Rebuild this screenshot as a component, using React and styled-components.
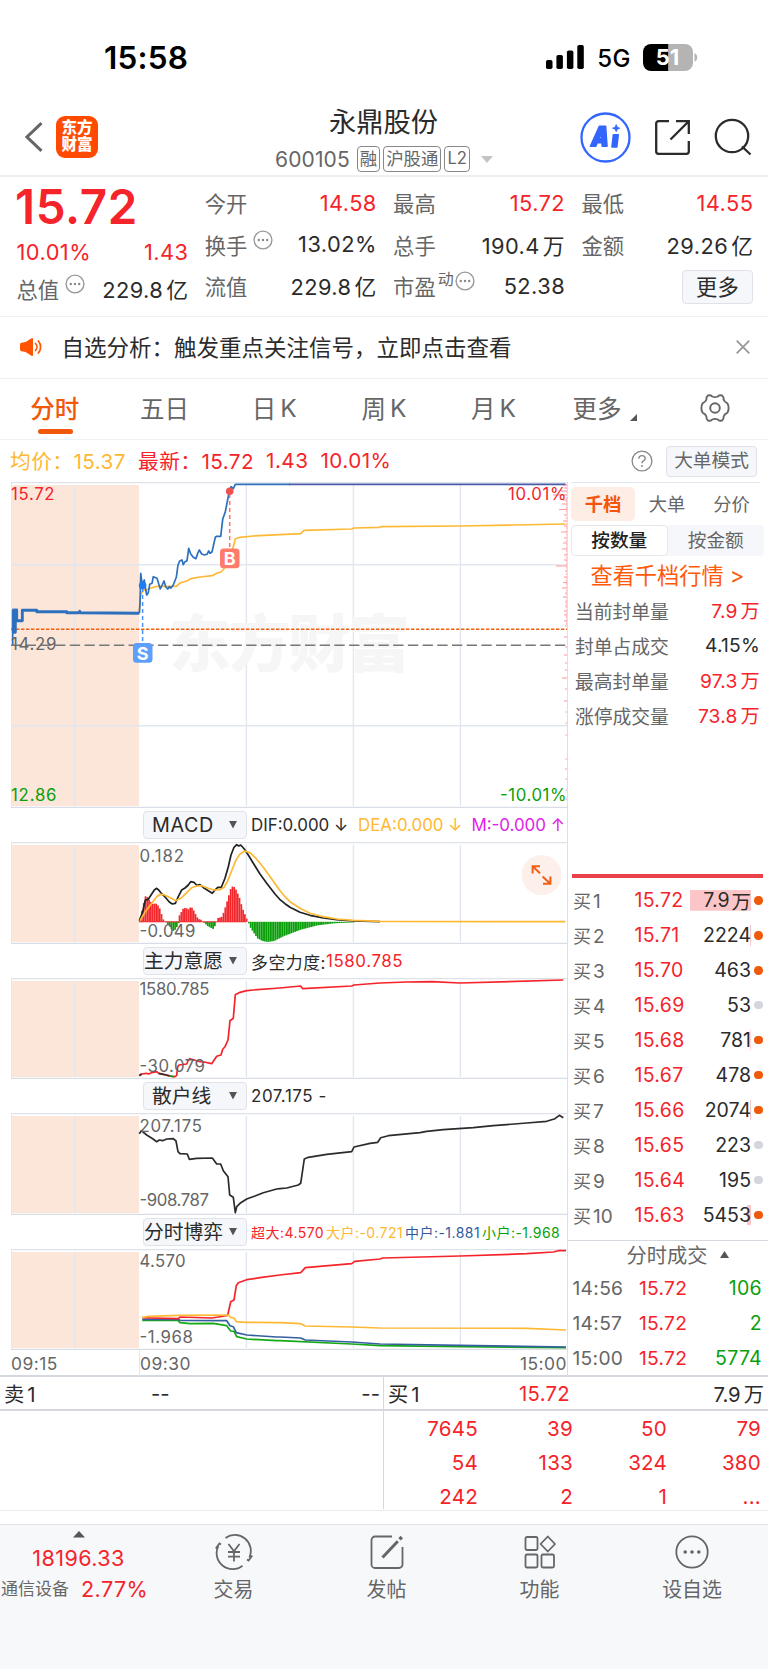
import React from 'react';
import styled, { createGlobalStyle, css } from 'styled-components';

const RED = '#f5242a';
const GREEN = '#0a9f0a';
const ORANGE = '#f5540a';
const AMBER = '#fdb933';
const GREY = '#666';
const INK = '#2b2b2b';
const GRID = '#e2e7ef';
const LINE = '#d5d9df';

const Global = createGlobalStyle`
  * { box-sizing: border-box; }
  body { margin: 0; background: #fff; }
  #root { font-family: Inter, "Noto Sans CJK SC", sans-serif; color: ${INK}; }
  svg { display: block; flex: none; }
  svg text { font-family: Inter, "Noto Sans CJK SC", sans-serif; }
`;

const Page = styled.div`
  width: 768px;
  height: 1669px;
  display: flex;
  flex-direction: column;
  overflow: hidden;
  white-space: nowrap;
`;

/* ---------- status bar ---------- */
const StatusBar = styled.div`
  height: 90px;
  display: flex;
  align-items: center;
  padding: 24px 70px 0 104px;
`;
const Clock = styled.div`
  font-size: 31.5px;
  font-weight: 600;
  line-height: 36px;
  letter-spacing: 0.2px;
  color: #000;
  flex: 1;
  padding-top: 1px;
`;
const Network = styled.div`
  font-size: 24px;
  font-weight: 450;
  line-height: 36px;
  letter-spacing: 0.5px;
  color: #000;
  margin: 3px 12px 0 13px;
`;

/* ---------- title bar ---------- */
const TitleBar = styled.header`
  height: 87px;
  display: grid;
  grid-template-columns: 200px 1fr 200px;
  border-bottom: 2px solid #eeeff0;
`;
const TitleLeft = styled.div`
  display: flex;
  align-items: center;
  gap: 13px;
  padding: 7px 0 0 25px;
`;
const Logo = styled.div`
  width: 42px;
  height: 42px;
  border-radius: 9px;
  background: #ff4a00;
  color: #fff;
  font-size: 15.5px;
  font-weight: 900;
  line-height: 17px;
  text-align: center;
  padding-top: 3px;
  white-space: normal;
`;
const TitleMid = styled.div`
  display: flex;
  flex-direction: column;
  align-items: center;
  padding-top: 15px;
`;
const StockName = styled.div`
  font-size: 27.3px;
  line-height: 36px;
  margin-right: 1px;
`;
const CodeRow = styled.div`
  display: flex;
  align-items: center;
  gap: 3px;
  height: 36px;
  font-size: 21px;
  color: ${GREY};
  letter-spacing: 0.1px;
  > :first-child { margin-right: 4px; }
  > svg { margin-left: 8px; }
`;
const Tag = styled.span`
  height: 26px;
  border: 1.4px solid #888;
  border-radius: 4px;
  padding: 0 2px;
  font-size: ${p => p.$size || 17.4}px;
  letter-spacing: 0;
  line-height: 23px;
`;
const TitleRight = styled.div`
  display: flex;
  align-items: center;
  justify-content: flex-end;
  gap: 23px;
  padding: 7px 16px 0 0;
`;

/* ---------- quote summary ---------- */
const Quote = styled.section`
  height: 140px;
  display: grid;
  grid-template-columns: 171.5px 171.5px 171.5px 171.5px;
  column-gap: 16.8px;
  padding: 5px 0 0 16.5px;
  border-bottom: 1px solid #f0f1f2;
`;
const QuoteCol = styled.div`
  display: flex;
  flex-direction: column;
`;
const Stat = styled.div`
  display: flex;
  align-items: center;
  justify-content: space-between;
  height: ${p => p.$h || 41.6}px;
  font-size: 21.8px;
  letter-spacing: 0.45px;
  color: ${p => p.$color || INK};
  > :last-child { margin-right: -0.5px; }
`;
const StatLabel = styled.span`
  display: flex;
  align-items: center;
  color: ${GREY};
  font-size: 21.3px;
  letter-spacing: 0;
  > svg { margin: -9px 0 0 ${p => (p.$tight ? 1 : 6)}px; }
`;
const Sup = styled.span`
  font-size: 16px;
  line-height: 16px;
  margin: -13px 0 0 2px;
`;
const BigPrice = styled.div`
  font-size: 47.5px;
  font-weight: 600;
  line-height: 50px;
  height: 51px;
  margin-left: -1.5px;
  color: ${RED};
  letter-spacing: 0.6px;
`;
const Unit = styled.span`
  margin-left: ${p => p.$gap || 3}px;
`;
const MoreButton = styled.button`
  align-self: flex-end;
  width: 71px;
  height: 34px;
  margin-top: 4.5px;
  border: 1px solid #dfe2e8;
  border-radius: 4px;
  background: #f6f7fa;
  font: inherit;
  font-size: 21.3px;
  line-height: 30px;
  color: ${INK};
  padding: 0;
`;

/* ---------- alert ---------- */
const Alert = styled.section`
  height: 62px;
  display: flex;
  align-items: center;
  padding: 0 18px 1px 19px;
  border-bottom: 1px solid #f0f1f2;
  font-size: 22.5px;
`;
const AlertText = styled.div`
  flex: 1;
  margin-left: 18.5px;
  padding-bottom: 2px;
`;

/* ---------- period tabs ---------- */
const Tabs = styled.nav`
  height: 61px;
  display: grid;
  grid-template-columns: repeat(5, 109.7px) 113px 1fr;
  border-bottom: 1px solid #f0f1f2;
`;
const Tab = styled.div`
  display: flex;
  justify-content: center;
  align-items: center;
  gap: ${p => p.$gap || 0}px;
  position: relative;
  padding-bottom: 3px;
  font-size: 24.5px;
  color: ${p => (p.$active ? '#f0580a' : GREY)};
  ${p => p.$active && css`
    font-weight: 500;
    &::after {
      content: '';
      position: absolute;
      left: 50%;
      bottom: 5px;
      width: 35px;
      height: 5px;
      margin-left: -17px;
      border-radius: 3px;
      background: #f0580a;
    }
  `}
`;

/* ---------- info row ---------- */
const InfoRow = styled.div`
  height: 42px;
  display: flex;
  align-items: center;
  padding: 0 11px 0 10px;
  font-size: 20.7px;
  letter-spacing: 0.45px;
`;
const Info = styled.span`
  color: ${p => p.$color};
  margin: 0 12px 2px 0;
`;
const Help = styled.span`
  margin-left: auto;
`;
const ModeButton = styled.button`
  width: 91px;
  height: 31px;
  margin-left: 13px;
  border: 1px solid #dfe2e8;
  border-radius: 4px;
  background: #f6f7fa;
  color: ${GREY};
  font: inherit;
  font-size: 18.7px;
  line-height: 28px;
  padding: 0;
`;

/* ---------- main split ---------- */
const Main = styled.main`
  height: 895px;
  display: grid;
  grid-template-columns: 568px 200px;
  border-bottom: 2px solid ${LINE};
`;
const Charts = styled.div`
  padding-left: 11px;
  border-right: 1.5px solid #dcdfe6;
`;
const PanelHead = styled.div`
  height: 34px;
  display: flex;
  align-items: center;
  padding-left: 132px;
  font-size: ${p => p.$size || 16.9}px;
`;
const Picker = styled.div`
  width: 104px;
  height: 27.5px;
  flex: none;
  display: flex;
  align-items: center;
  justify-content: space-between;
  border: 1px solid #dfe2e8;
  border-radius: 4px;
  background: #f6f7fa;
  padding: 0 9px 0 ${p => (p.$wide ? 0 : 8)}px;
  margin-right: 4px;
  font-size: 19.8px;
  letter-spacing: ${p => p.$ls || 0}px;
  line-height: 25px;
`;
const Legend = styled.span`
  color: ${p => p.$color || INK};
  margin-right: ${p => p.$mr || 0}px;
  letter-spacing: ${p => p.$ls || 0}px;
`;
const TimeAxis = styled.div`
  height: 26px;
  display: grid;
  grid-template-columns: 128px 1fr auto;
  align-items: center;
  font-size: 17.4px;
  letter-spacing: 0.5px;
  color: ${GREY};
  > * { line-height: 28px; height: 26px; }
  > :nth-child(2) { border-left: 1px solid ${GRID}; }
`;

/* ---------- right side panel ---------- */
const Side = styled.aside`
  display: flex;
  flex-direction: column;
`;
const SideTop = styled.div`
  height: 392px;
  padding: 0 4px 0 3px;
`;
const SideTabs = styled.div`
  display: grid;
  grid-template-columns: 64px 64px 65px;
  border-top: 1.5px solid ${GRID};
  width: 189px;
  height: 43px;
  padding-top: 3.500px;
`;
const SideTab = styled.div`
  height: 34px;
  border-radius: 5px;
  text-align: center;
  font-size: 18.3px;
  line-height: 34px;
  color: ${p => (p.$active ? ORANGE : GREY)};
  background: ${p => (p.$active ? '#fdede4' : 'transparent')};
  font-weight: ${p => (p.$active ? 700 : 400)};
`;
const Segment = styled.div`
  display: grid;
  grid-template-columns: 1fr 1fr;
  height: 31px;
  border-radius: 4px;
  background: #f6f7fa;
`;
const SegmentItem = styled.div`
  text-align: center;
  font-size: 18.7px;
  line-height: 29px;
  border-radius: 5px;
  border: 1px solid ${p => (p.$active ? '#e6e8ec' : 'transparent')};
  background: ${p => (p.$active ? '#fff' : 'transparent')};
  color: ${p => (p.$active ? '#222' : GREY)};
  font-weight: ${p => (p.$active ? 500 : 400)};
`;
const DepthLink = styled.div`
  height: 36.5px;
  line-height: 39px;
  text-align: center;
  color: #ff5a0a;
  font-size: 22.2px;
`;
const LimitRow = styled.div`
  display: flex;
  justify-content: space-between;
  align-items: center;
  height: 35px;
  padding: 0 4px 0 4px;
  font-size: 19.2px;
  letter-spacing: 0.2px;
  color: ${p => p.$color || RED};
`;
const LimitLabel = styled.span`
  font-size: 18.8px;
  letter-spacing: 0;
  color: ${GREY};
`;
const SplitBar = styled.div`
  height: 3.5px;
  flex: none;
  margin: 0 5px 0 4px;
  background: #e9404a;
`;
const Bids = styled.div`
  padding-top: 5.5px;
`;
const BidRow = styled.div`
  display: grid;
  grid-template-columns: 61.5px 50px 66.5px 1fr;
  align-items: center;
  height: 34.93px;
  padding-left: 5px;
  font-size: 19.5px;
`;
const Lbl = styled.span`
  color: ${GREY};
  font-size: 18px;
  b { font-weight: 400; margin-left: 2px; font-size: 19px; }
`;
const Price = styled.span`
  color: ${RED};
  letter-spacing: 0.3px;
`;
const Qty = styled.span`
  justify-self: end;
  display: flex;
  justify-content: flex-end;
  align-items: center;
  width: 61px;
  height: 20.5px;
  background: linear-gradient(#fcc6c8, #fcc6c8) right / ${p => p.$depth}px 100% no-repeat;
`;
const Dot = styled.i`
  width: 8.5px;
  height: 8.5px;
  margin-left: 3px;
  border-radius: 50%;
  background: ${p => (p.$on ? '#ee5a0a' : '#d3d6dc')};
`;
const TradesHead = styled.div`
  display: flex;
  align-items: center;
  justify-content: center;
  gap: 13px;
  height: 29.500px;
  margin-top: auto;
  border-top: 1.5px solid ${LINE};
  font-size: 20.2px;
  color: ${GREY};
  padding: 0 0 2px 20px;
`;
const TradeRow = styled.div`
  display: grid;
  grid-template-columns: 66.5px 50px 1fr;
  align-items: center;
  height: 35.4px;
  padding: 0 6px 0 4.5px;
  font-size: 19.2px;
  letter-spacing: 0.3px;
  color: ${GREY};
`;
const Vol = styled.span`
  text-align: right;
  font-size: 19.5px;
  color: ${GREEN};
`;

/* ---------- level-one queue ---------- */
const Queue = styled.section`
  display: grid;
  grid-template-columns: 383px 1fr;
  grid-template-rows: 132px;
  height: 134px;
  flex: none;
  border-bottom: 1px solid #e9ebee;
`;
const Half = styled.div`
  border-left: ${p => (p.$divider ? `1.5px solid ${LINE}` : 'none')};
`;
const QueueHead = styled.div`
  display: grid;
  grid-template-columns: ${p => p.$cols};
  align-items: center;
  height: 34px;
  padding: ${p => p.$pad};
  border-bottom: 2px solid ${LINE};
  font-size: 20.3px;
  > :last-child { text-align: right; }
`;
const QueueGrid = styled.div`
  display: grid;
  grid-template-columns: 94px 95px 94px 94px;
  grid-auto-rows: 33.7px;
  align-items: center;
  padding-top: 1px;
  text-align: right;
  font-size: 20.6px;
  letter-spacing: 0.2px;
  color: ${RED};
`;

/* ---------- bottom navigation ---------- */
const BottomNav = styled.footer`
  flex: 1;
  margin-top: 12.500px;
  border-top: 1.5px solid #e1e3e6;
  background: #f7f8fa;
  display: grid;
  grid-template-columns: 157px 153px 153px 153px 152px;
`;
const NavItem = styled.div`
  display: flex;
  flex-direction: column;
  align-items: center;
  padding-top: 9px;
  font-size: 19.9px;
  line-height: 28px;
  color: ${GREY};
  > svg { margin-bottom: 6px; }
`;
const IndexItem = styled.div`
  display: flex;
  flex-direction: column;
  align-items: center;
  padding-top: 6.500px;
  font-size: 21.6px;
  letter-spacing: 0.4px;
  line-height: 28px;
  color: ${RED};
  > svg { margin-bottom: 6px; }
`;
const Sector = styled.div`
  display: flex;
  align-items: center;
  align-self: flex-start;
  gap: 12px;
  margin-top: 3.500px;
  padding-left: 1px;
  > span { font-size: 17px; letter-spacing: 0; color: ${GREY}; }
`;

/* ---------- chart helpers ---------- */
// Points are traced in two 3x strips: a left one starting at x=0 and a right one at x=280.
const trace = (oy, left, right = []) =>
  [...left.map(([x, y]) => [x / 3, oy + y / 3]), ...right.map(([x, y]) => [280 + x / 3, oy + y / 3])]
    .map(([x, y]) => `${x.toFixed(1)},${y.toFixed(1)}`)
    .join(' ');

const Line = ({ pts, c, w = 1.7 }) => (
  <polyline points={pts} fill="none" stroke={c} strokeWidth={w} strokeLinejoin="round" />
);

const Plot = ({ y, h, rows = [], children }) => (
  <svg width="556" height={h} viewBox={`11 ${y} 556 ${h}`}>
    <rect x="11.5" y={y + 3} width="127.5" height={h - 5} fill="#fce5d9" />
    {[75, 246.4, 353.4, 460.4].map(x => (
      <line key={x} x1={x} x2={x} y1={y + 3} y2={y + h - 2} stroke={GRID} strokeWidth="1.4" />
    ))}
    {rows.map(r => (
      <line key={r} x1="11" x2="567" y1={r} y2={r} stroke={GRID} strokeWidth="1.6" />
    ))}
    <line x1="11.4" x2="11.4" y1={y} y2={y + h} stroke={GRID} strokeWidth="1" />
    <line x1="11" x2="567" y1={y + 0.7} y2={y + 0.7} stroke="#dee2e9" strokeWidth="1.3" />
    <line x1="11" x2="567" y1={y + h - 0.5} y2={y + h - 0.5} stroke="#d9dde5" strokeWidth="1.3" />
    {children}
  </svg>
);

const Tick = ({ x = 139.5, y, w, c = GREY, end, children }) => (
  <text x={x} y={y} fontSize="16.8" fill={c} textLength={w} textAnchor={end ? 'end' : 'start'}>
    {children}
  </text>
);

const bars = segs => {
  const out = [];
  segs.forEach(s => {
    for (let x = s[0][0]; x <= s[s.length - 1][0]; x += 1.78) {
      const i = Math.max(1, s.findIndex(p => p[0] >= x));
      const [a, b] = [s[i - 1], s[i]];
      const v = a[1] + ((b[1] - a[1]) * (x - a[0])) / (b[0] - a[0]);
      out.push([x, v]);
    }
  });
  return out;
};
const BASE = 921.8;
const macdBars = bars(
  [
    [[418, 355], [428, 312], [435, 285], [445, 300], [455, 312], [465, 310], [475, 320], [483, 345], [489, 363]],
    [[496, 367], [505, 378], [517, 393], [525, 388], [534, 368]],
    [[536, 346], [548, 324], [560, 325], [565, 330], [570, 318], [578, 330], [586, 346], [592, 357], [604, 360]],
    [[610, 368], [620, 378], [637, 387], [646, 372]],
    [[652, 354], [664, 350], [671, 330], [680, 300], [690, 265], [697, 257], [705, 268], [715, 290], [725, 325], [735, 350], [740, 362]],
    [[744, 370], [750, 385], [760, 400], [770, 415], [785, 423], [800, 426], [820, 423], [850, 408], [900, 389], [950, 376], [1000, 370], [1060, 367]],
  ].map(s => s.map(([x, y]) => [x / 3, 800 + y / 3]))
);
const profile = [
  [485, 4], [488, 3], [491, 6], [495, 14], [500, 4], [504, 5], [509.5, 8], [515, 3], [521, 4], [526, 3], [532, 6],
  [538, 3], [543, 4], [549, 5], [555, 3], [560, 3], [566, 11], [571, 2], [577, 3], [582.5, 4], [588, 5], [593, 2],
  [597, 4], [602, 2], [606, 2], [611, 3], [615, 3], [621, 3], [626, 2], [637, 3], [647, 2], [655, 3], [663, 2],
  [670, 2], [678, 5], [689, 2], [701, 3], [712, 1.5], [723, 1.5], [735, 1.5], [759, 1.5], [769, 2], [779, 1.5], [790, 1.5], [799, 1.5],
];

const MainPlot = () => (
  <Plot y={482} h={326} rows={[564.7, 725.7]}>
    <text x="169" y="667" fontSize="62" fontWeight="900" fill="#f6f6f7" textLength="241">东方财富</text>
    <line x1="11" x2="567" y1="645.3" y2="645.3" stroke="#777" strokeWidth="1.4" strokeDasharray="10.3 4.4" />
    <line x1="11" x2="567" y1="629.3" y2="629.3" stroke="#f0600f" strokeWidth="1.6" strokeDasharray="3.4 1.6" />
    {profile.map(([y, w]) => (
      <line key={y} x1={567 - w} x2="567" y1={y} y2={y} stroke="#ff9ea2" strokeWidth="1.1" />
    ))}
    <line x1="566.4" x2="566.4" y1="484" y2="626" stroke="#ffb3b5" strokeWidth="1" strokeDasharray="2 1.3" />
    <Line
      c={AMBER}
      pts={trace(470,
        [[418, 430], [421, 380], [428, 362], [447, 356], [470, 349], [529, 349], [540, 339], [560, 333], [572, 326], [600, 321], [637, 317], [650, 310], [663, 306], [672, 296], [688, 262], [700, 230], [706, 206], [720, 202], [760, 198], [840, 194]],
        [[62, 191], [72, 181], [215, 177], [222, 174], [298, 172], [303, 170], [540, 168], [700, 165], [856, 162]])}
    />
    <Line
      c="#2d70bd"
      w={2.9}
      pts={trace(470, [[37, 420], [40, 420], [40, 487], [46, 487], [46, 420], [50, 420], [50, 452], [67, 452], [67, 421], [110, 421], [110, 425], [200, 425], [200, 428], [237, 428], [239, 424], [241, 428], [418, 430]])}
    />
    <Line c="#2d70bd" w={1.6} pts={trace(470, [[38, 420], [38, 525]])} />
    <Line
      c="#2d70bd"
      pts={trace(470,
        [[418, 430], [420, 400], [422, 310], [427, 345], [433, 330], [436, 352], [440, 375], [445, 368], [449, 343], [456, 340], [460, 320], [471, 325], [481, 357], [492, 333], [497, 350], [503, 357], [508, 350], [513, 354], [520, 345], [529, 322], [534, 285], [539, 273], [546, 270], [550, 284], [555, 275], [561, 272], [566, 235], [572, 252], [580, 262], [588, 266], [593, 250], [598, 240], [605, 252], [613, 255], [621, 253], [626, 243], [630, 250], [636, 246], [646, 202], [650, 199], [662, 199], [668, 148], [676, 125], [688, 64], [693, 50], [700, 56], [706, 43], [870, 43]])}
    />
    <line x1="289" x2="565.5" y1="484.4" y2="484.4" stroke="#4a5aa8" strokeWidth="1.8" />
    <line x1="142.6" x2="142.6" y1="588" y2="643" stroke="#4a93fa" strokeWidth="1.5" strokeDasharray="4 3" />
    <circle cx="142.6" cy="585.6" r="3.8" fill="#1e7cf2" />
    <rect x="133" y="643" width="19.5" height="19.7" rx="3.5" fill="#5e9ffb" />
    <text x="142.7" y="659.5" fontSize="18" fontWeight="700" fill="#fff" textAnchor="middle">S</text>
    <line x1="229.7" x2="229.7" y1="494" y2="549" stroke="#ff6f66" strokeWidth="1.5" strokeDasharray="4 3" />
    <circle cx="229.7" cy="491.3" r="3.8" fill="#ee524f" />
    <rect x="220" y="548.6" width="19.5" height="19.7" rx="3.5" fill="#ff7b6c" />
    <text x="229.8" y="565" fontSize="18" fontWeight="700" fill="#fff" textAnchor="middle">B</text>
    <Tick x={11} y={500} w={43.5} c={RED}>15.72</Tick>
    <Tick x={11} y={650.4} w={45.5}>14.29</Tick>
    <Tick x={11} y={801.4} w={45.5} c={GREEN}>12.86</Tick>
    <Tick x={566.5} y={500} w={58.5} c={RED} end>10.01%</Tick>
    <Tick x={566.5} y={801.4} w={66.5} c={GREEN} end>-10.01%</Tick>
  </Plot>
);

const MacdPlot = () => (
  <Plot y={842} h={102}>
    {macdBars.map(([x, v]) => (
      <rect key={x} x={x} width="1.7" y={Math.min(v, BASE)} height={Math.abs(v - BASE)} fill={v < BASE ? '#f3262b' : GREEN} />
    ))}
    <line x1="139" x2="246" y1={BASE} y2={BASE} stroke="#f3262b" strokeWidth="1" />
    <Line
      c="#222"
      pts={trace(800,
        [[418, 362], [428, 335], [436, 300], [445, 298], [455, 282], [463, 270], [470, 265], [476, 270], [485, 281], [497, 293], [508, 306], [517, 312], [526, 310], [535, 290], [545, 270], [555, 264], [565, 255], [572, 245], [582, 247], [590, 256], [600, 254], [612, 264], [625, 272], [637, 280], [645, 270], [653, 262], [664, 262], [675, 235], [685, 200], [693, 165], [702, 142], [710, 134], [716, 138], [722, 135], [733, 147], [745, 165], [760, 190], [780, 222], [800, 250], [825, 282], [839, 298]],
        [[15, 311], [30, 322], [60, 337], [90, 346], [130, 354], [170, 359], [220, 363], [300, 365]])}
    />
    <Line
      c={AMBER}
      pts={trace(800,
        [[420, 362], [436, 335], [455, 310], [470, 290], [480, 283], [492, 284], [508, 292], [527, 302], [545, 293], [560, 278], [575, 263], [590, 258], [605, 257], [625, 265], [643, 270], [660, 269], [672, 262], [682, 245], [695, 212], [708, 180], [720, 162], [735, 153], [750, 158], [765, 172], [790, 202], [815, 237], [839, 271]],
        [[15, 290], [30, 305], [60, 325], [90, 340], [130, 350], [170, 357], [220, 361], [300, 364], [856, 365]])}
    />
    <Tick y={861.7} w={44.5}>0.182</Tick>
    <Tick y={936.6} w={56}>-0.049</Tick>
    <circle cx="541.6" cy="875" r="20" fill="#fdf0ea" />
    <g fill="none" stroke="#f05f14" strokeWidth="2">
      <path d="M532.6 873.5V866.3H540M532.6 866.3l7.4 7" />
      <path d="M550.4 876.5v7.2H543M550.4 883.7l-7.8-7.2" />
    </g>
  </Plot>
);

const MainForcePlot = () => (
  <Plot y={978} h={101}>
    <Line
      c={RED}
      pts={trace(800,
        [[418, 826], [425, 822], [440, 820], [445, 822], [455, 818], [470, 815], [476, 820], [490, 823], [515, 829], [525, 830], [530, 826], [533, 800], [537, 795], [560, 792], [565, 780], [570, 776], [600, 785], [612, 786], [635, 791], [650, 769], [663, 765], [668, 748], [675, 740], [684, 720], [690, 662], [700, 655], [706, 584], [720, 577], [740, 572], [760, 570], [839, 564]],
        [[62, 558], [68, 566], [215, 558], [222, 555], [300, 549], [380, 546], [455, 545], [540, 549], [850, 540]])}
    />
    <Line c="#333" pts={trace(800, [[418, 827], [425, 822]])} />
    <Line c="#333" pts={trace(800, [[476, 820], [490, 823], [510, 828]])} />
    <Line c={GREEN} pts={trace(800, [[508, 828], [522, 830]])} />
    <Tick y={995.4} w={70}>1580.785</Tick>
    <Tick y={1071.7} w={65.5}>-30.079</Tick>
  </Plot>
);

const RetailPlot = () => (
  <Plot y={1113} h={102}>
    <Line
      c="#2b2b2b"
      pts={trace(1080,
        [[418, 161], [424, 152], [440, 165], [458, 176], [470, 185], [478, 180], [488, 182], [500, 177], [520, 176], [528, 183], [534, 215], [540, 221], [562, 222], [568, 238], [590, 235], [637, 234], [650, 252], [662, 252], [670, 272], [684, 290], [689, 345], [700, 352], [706, 398], [710, 380], [720, 370], [740, 357], [765, 348], [790, 338], [830, 327]],
        [[0, 326], [20, 324], [55, 315], [62, 310], [73, 237], [85, 232], [140, 223], [215, 215], [222, 201], [270, 190], [293, 187], [302, 173], [325, 167], [420, 158], [440, 154], [490, 149], [580, 143], [640, 137], [740, 129], [800, 124], [825, 116], [838, 106], [850, 113]])}
    />
    <Tick y={1132.3} w={62.5}>207.175</Tick>
    <Tick y={1206} w={69.5}>-908.787</Tick>
  </Plot>
);

const GamePlot = () => (
  <Plot y={1249} h={101}>
    <Line
      c="#16a816"
      pts={trace(1080,
        [[427, 721], [533, 721], [540, 728], [570, 731], [640, 730], [680, 737], [692, 753], [702, 754], [710, 770], [740, 777], [830, 782]],
        [[0, 782], [215, 792], [300, 797], [540, 800], [858, 803]])}
    />
    <Line
      c="#3560a0"
      pts={trace(1080,
        [[427, 718], [535, 718], [540, 721], [680, 722], [690, 737], [700, 740], [709, 758], [740, 765], [830, 771]],
        [[0, 771], [62, 774], [76, 780], [215, 786], [300, 792], [540, 796], [858, 801]])}
    />
    <Line
      c={RED}
      pts={trace(1080,
        [[427, 713], [450, 714], [535, 716], [540, 711], [635, 714], [655, 711], [683, 706], [692, 665], [702, 660], [709, 617], [715, 608], [740, 599], [780, 593], [839, 585]],
        [[62, 578], [76, 563], [215, 551], [224, 544], [300, 537], [308, 534], [540, 528], [740, 521], [820, 516], [835, 512], [858, 512]])}
    />
    <Line
      c={AMBER}
      pts={trace(1080,
        [[427, 713], [445, 709], [540, 706], [685, 705], [692, 712], [702, 714], [709, 725], [740, 727], [830, 728]],
        [[0, 728], [62, 731], [76, 738], [215, 741], [300, 744], [740, 745], [858, 750]])}
    />
    <Tick y={1267.4} w={46}>4.570</Tick>
    <Tick y={1342.7} w={53.5}>-1.968</Tick>
  </Plot>
);

/* ---------- icons ---------- */
const Triangle = ({ w = 9, h = 6.5, up, c = '#555' }) => (
  <svg width={w} height={h} viewBox="0 0 10 8" preserveAspectRatio="none">
    <path d={up ? 'M5 0L10 8H0z' : 'M0 0H10L5 8z'} fill={c} />
  </svg>
);
const MoreDots = () => (
  <svg width="20" height="20" viewBox="0 0 20 20">
    <circle cx="10" cy="10" r="8.9" fill="none" stroke="#999" strokeWidth="1.4" />
    <g fill="#888"><circle cx="5.8" cy="10" r="1.2" /><circle cx="10" cy="10" r="1.2" /><circle cx="14.2" cy="10" r="1.2" /></g>
  </svg>
);
const BackIcon = () => (
  <svg width="18" height="30" viewBox="0 0 18 30"><path d="M16.5 1.2L2 15l14.5 13.8" fill="none" stroke="#666" strokeWidth="3" /></svg>
);
const SignalIcon = () => (
  <svg width="38" height="24" viewBox="0 0 38 24">
    <rect x="0" y="15" width="6.5" height="9" rx="1.8" /><rect x="10.4" y="10" width="6.5" height="14" rx="1.8" />
    <rect x="20.9" y="5.4" width="6.5" height="18.6" rx="1.8" /><rect x="31.3" y="0" width="6.5" height="24" rx="1.8" />
  </svg>
);
const BatteryIcon = () => (
  <svg width="55" height="27" viewBox="0 0 55 27">
    <path d="M8 0H25.5V27H8a8 8 0 0 1-8-8V8a8 8 0 0 1 8-8z" />
    <path d="M25.5 0H42a8 8 0 0 1 8 8V19a8 8 0 0 1-8 8H25.5z" fill="#b4b4b4" />
    <path d="M51.5 9a5 5 0 0 1 0 9z" fill="#b4b4b4" />
    <text x="24.5" y="21.3" fontSize="22" fontWeight="700" fill="#fff" textAnchor="middle">51</text>
  </svg>
);
const AiIcon = () => (
  <svg width="51" height="51" viewBox="0 0 51 51">
    <circle cx="25.5" cy="25.5" r="24" fill="none" stroke="#3366ff" strokeWidth="2.3" />
    <g fill="#3366ff" stroke="#3366ff" strokeLinejoin="round" strokeWidth="1.6">
      <path fillRule="evenodd" d="M10.5 34.2L19.4 14.4H25.6L27 34.2H22.2L22 30.8H17.2L15.8 34.2z M18.8 26.6H21.7L21.5 20.6z" />
      <path d="M33.4 22.8H38.2L36.8 35H32z" />
      <path d="M36.2 12.6L37.3 15.2L39.8 16.2L37.3 17.2L36.2 19.8L35.1 17.2L32.6 16.2L35.1 15.2z" strokeWidth="0.8" />
    </g>
  </svg>
);
const ShareIcon = () => (
  <svg width="37" height="37" viewBox="0 0 37 37" fill="none" stroke="#2b2b2b" strokeWidth="2.3">
    <path d="M15 2.2H4.5A2.3 2.3 0 0 0 2.2 4.5V32.5A2.3 2.3 0 0 0 4.5 34.8H32.5A2.3 2.3 0 0 0 34.8 32.5V22" />
    <path d="M22 2.2H34.8V15M34.5 2.5L16.5 20.5" />
  </svg>
);
const SearchIcon = () => (
  <svg width="38" height="38" viewBox="0 0 38 38" fill="none" stroke="#2b2b2b" strokeWidth="2.3">
    <circle cx="18" cy="18" r="16.2" /><path d="M28 28.5L36.5 36.5" />
  </svg>
);
const SpeakerIcon = () => (
  <svg width="24" height="20" viewBox="0 0 24 20">
    <path d="M1 7.5Q1 6 2.5 5.8L6.5 5L12.5 1.2Q14 .6 14 2V18Q14 19.4 12.5 18.8L6.5 15L2.5 14.2Q1 14 1 12.5z" fill="#ff5500" />
    <path d="M16.5 6.5a5 5 0 0 1 0 7M19.3 4a9 9 0 0 1 0 12" fill="none" stroke="#ff5500" strokeWidth="1.7" strokeLinecap="round" />
  </svg>
);
const CloseIcon = () => (
  <svg width="14" height="14" viewBox="0 0 14 14"><path d="M.7.7L13.3 13.3M13.3.7L.7 13.3" stroke="#999" strokeWidth="1.8" /></svg>
);
const GearIcon = () => (
  <svg width="30" height="30" viewBox="0 0 30 30" fill="none" stroke="#666" strokeWidth="1.9" strokeLinejoin="round">
    <path d="M8 2.5Q11 1.5 12.2 3.5Q15 4.8 17.8 3.5Q19 1.5 22 2.5Q24 4 23.6 6.5Q24.5 9.3 27.3 10.2Q28.8 12.5 28.6 15Q28.8 17.5 27.3 19.8Q24.5 20.7 23.6 23.5Q24 26 22 27.5Q19 28.5 17.8 26.5Q15 25.2 12.2 26.5Q11 28.5 8 27.5Q6 26 6.4 23.5Q5.5 20.7 2.7 19.8Q1.2 17.5 1.4 15Q1.2 12.5 2.7 10.2Q5.5 9.3 6.4 6.5Q6 4 8 2.5z" />
    <circle cx="15" cy="15" r="4.8" />
  </svg>
);
const HelpIcon = () => (
  <svg width="22" height="22" viewBox="0 0 22 22">
    <circle cx="11" cy="11" r="9.9" fill="none" stroke="#888" strokeWidth="1.3" />
    <path d="M7.8 8.8Q7.8 5.6 11 5.6Q14.2 5.6 14.2 8.4Q14.2 9.9 12.5 10.9Q11 11.9 11 13.3" fill="none" stroke="#888" strokeWidth="1.4" />
    <circle cx="11" cy="16" r="1" fill="#888" />
  </svg>
);
const Corner = styled.svg.attrs({ width: 7, height: 7, viewBox: '0 0 7 7' })`
  margin-top: 19px;
`;
const CornerIcon = () => (
  <Corner><path d="M7 0V7H0z" fill="#555" /></Corner>
);
const navStroke = { fill: 'none', stroke: '#666', strokeWidth: 1.8 };
const TradeIcon = () => (
  <svg width="38" height="36" viewBox="0 0 38 36" {...navStroke}>
    <path d="M10.5 3.9A16 16 0 0 1 34.4 23.5M27.5 31.7A16 16 0 0 1 3.3 12M.8 14.5L4.4 9.5L6 10.5M37.2 21.5L33.6 26.5L32 25.5" />
    <path d="M13.5 10L19 17.2L24.5 10M19 17.2V27.5M13 18H25M13 22.7H25" />
  </svg>
);
const PostIcon = () => (
  <svg width="34" height="36" viewBox="0 0 34 36" {...navStroke}>
    <path d="M22 2.5H5A3.5 3.5 0 0 0 1.5 6V30.5A3.5 3.5 0 0 0 5 34H29A3.5 3.5 0 0 0 32.5 30.5V13" />
    <path d="M12.5 23.5L27.8 7.3" strokeWidth="3" />
    <path d="M29.6 5.4L31.8 3" strokeWidth="3.4" />
  </svg>
);
const ApplyIcon = () => (
  <svg width="32" height="36" viewBox="0 0 32 36" {...navStroke}>
    <rect x="1.5" y="3" width="12" height="13" rx="1.5" /><rect x="1.5" y="20.5" width="12" height="13" rx="1.5" />
    <rect x="17.5" y="20.5" width="12.5" height="13" rx="1.5" />
    <path d="M23.8 2.5L31 10L23.8 17.5L16.6 10z" strokeLinejoin="round" />
  </svg>
);
const AddIcon = () => (
  <svg width="34" height="36" viewBox="0 0 34 36" {...navStroke}>
    <circle cx="17" cy="18" r="15.7" />
    <g fill="#666" stroke="none"><circle cx="10.2" cy="18" r="1.8" /><circle cx="17" cy="18" r="1.8" /><circle cx="23.8" cy="18" r="1.8" /></g>
  </svg>
);

/* ---------- data ---------- */
const bids = [
  ['1', '15.72', '7.9', 61, true], ['2', '15.71', '2224', 1.5, true], ['3', '15.70', '463', 0.5, true],
  ['4', '15.69', '53', 0, false], ['5', '15.68', '781', 0.7, true], ['6', '15.67', '478', 0.5, true],
  ['7', '15.66', '2074', 1.5, true], ['8', '15.65', '223', 0.3, false], ['9', '15.64', '195', 0.3, false],
  ['10', '15.63', '5453', 4, true],
];
const limits = [
  ['当前封单量', '7.9', '万'], ['封单占成交', '4.15%', '', INK], ['最高封单量', '97.3', '万'], ['涨停成交量', '73.8', '万'],
];
const trades = [['14:56', '15.72', '106'], ['14:57', '15.72', '2'], ['15:00', '15.72', '5774']];
const queue = ['7645', '39', '50', '79', '54', '133', '324', '380', '242', '2', '1', '...'];

const Field = ({ label, extra, tight, value, unit, color, h }) => (
  <Stat $color={color} $h={h}>
    <StatLabel $tight={tight}>{label}{extra}</StatLabel>
    <span>{value}{unit && <Unit>{unit}</Unit>}</span>
  </Stat>
);

const Select = ({ wide, ls, children }) => (
  <Picker $wide={wide} $ls={ls}>{children}<Triangle w={8} h={7.5} /></Picker>
);

export default function App() {
  return (
    <Page lang="zh-CN">
      <Global />
      <StatusBar>
        <Clock>15:58</Clock>
        <SignalIcon />
        <Network>5G</Network>
        <BatteryIcon />
      </StatusBar>

      <TitleBar>
        <TitleLeft><BackIcon /><Logo>东方<br />财富</Logo></TitleLeft>
        <TitleMid>
          <StockName>永鼎股份</StockName>
          <CodeRow>
            <span>600105</span><Tag>融</Tag><Tag>沪股通</Tag><Tag $size={16.6}>L2</Tag>
            <Triangle w={12} h={7} c="#c4c4c4" />
          </CodeRow>
        </TitleMid>
        <TitleRight><AiIcon /><ShareIcon /><SearchIcon /></TitleRight>
      </TitleBar>

      <Quote>
        <QuoteCol>
          <BigPrice>15.72</BigPrice>
          <Stat $color={RED} $h={37}><span>10.01%</span><span>1.43</span></Stat>
          <Field label="总值" extra={<MoreDots />} value="229.8" unit="亿" h={36} />
        </QuoteCol>
        <QuoteCol>
          <Field label="今开" value="14.58" color={RED} />
          <Field label="换手" extra={<MoreDots />} value="13.02%" />
          <Field label="流值" value="229.8" unit="亿" />
        </QuoteCol>
        <QuoteCol>
          <Field label="最高" value="15.72" color={RED} />
          <Field label="总手" value="190.4" unit="万" />
          <Field label="市盈" extra={<><Sup>动</Sup><MoreDots /></>} tight value="52.38" />
        </QuoteCol>
        <QuoteCol>
          <Field label="最低" value="14.55" color={RED} />
          <Field label="金额" value="29.26" unit="亿" />
          <MoreButton>更多</MoreButton>
        </QuoteCol>
      </Quote>

      <Alert>
        <SpeakerIcon />
        <AlertText>自选分析：触发重点关注信号，立即点击查看</AlertText>
        <CloseIcon />
      </Alert>

      <Tabs>
        <Tab $active>分时</Tab>
        <Tab>五日</Tab>
        <Tab $gap={4}><span>日</span>K</Tab>
        <Tab $gap={4}><span>周</span>K</Tab>
        <Tab $gap={4}><span>月</span>K</Tab>
        <Tab $gap={9}>更多<CornerIcon /></Tab>
        <Tab><GearIcon /></Tab>
      </Tabs>

      <InfoRow>
        <Info $color={AMBER}>均价：15.37</Info>
        <Info $color={RED}>最新：15.72</Info>
        <Info $color={RED}>1.43</Info>
        <Info $color={RED}>10.01%</Info>
        <Help><HelpIcon /></Help>
        <ModeButton>大单模式</ModeButton>
      </InfoRow>

      <Main>
        <Charts>
          <MainPlot />
          <PanelHead>
            <Select ls={0.6}>MACD</Select>
            <Legend $mr={10}>DIF:0.000 ↓</Legend>
            <Legend $color={AMBER} $mr={9}>DEA:0.000 ↓</Legend>
            <Legend $color="#e01ee6">M:-0.000 ↑</Legend>
          </PanelHead>
          <MacdPlot />
          <PanelHead>
            <Select wide>主力意愿</Select>
            <Legend $ls={0.5}>多空力度:</Legend><Legend $color={RED} $ls={0.6}>1580.785</Legend>
          </PanelHead>
          <MainForcePlot />
          <PanelHead>
            <Select>散户线</Select>
            <Legend $ls={0.6}>207.175 -</Legend>
          </PanelHead>
          <RetailPlot />
          <PanelHead $size={14}>
            <Select wide>分时博弈</Select>
            <Legend $color={RED} $mr={2} $ls={0.45}>超大:4.570</Legend>
            <Legend $color={AMBER} $mr={2} $ls={0.45}>大户:-0.721</Legend>
            <Legend $color="#2f5b9e" $mr={2} $ls={0.45}>中户:-1.881</Legend>
            <Legend $color={GREEN} $ls={0.45}>小户:-1.968</Legend>
          </PanelHead>
          <GamePlot />
          <TimeAxis><span>09:15</span><span>09:30</span><span>15:00</span></TimeAxis>
        </Charts>

        <Side>
          <SideTop>
            <SideTabs>
              <SideTab $active>千档</SideTab><SideTab>大单</SideTab><SideTab>分价</SideTab>
            </SideTabs>
            <Segment>
              <SegmentItem $active>按数量</SegmentItem><SegmentItem>按金额</SegmentItem>
            </Segment>
            <DepthLink>查看千档行情 &gt;</DepthLink>
            {limits.map(([l, v, u, c]) => (
              <LimitRow key={l} $color={c}>
                <LimitLabel>{l}</LimitLabel><span>{v}{u && <Unit>{u}</Unit>}</span>
              </LimitRow>
            ))}
          </SideTop>
          <SplitBar />
          <Bids>
            {bids.map(([n, p, q, d, on]) => (
              <BidRow key={n}>
                <Lbl>买<b>{n}</b></Lbl>
                <Price>{p}</Price>
                <Qty $depth={d}>{q}{n === '1' && <Unit $gap={2}>万</Unit>}</Qty>
                <Dot $on={on} />
              </BidRow>
            ))}
          </Bids>
          <TradesHead>分时成交<Triangle w={9} h={7} up /></TradesHead>
          {trades.map(([t, p, v]) => (
            <TradeRow key={t}><span>{t}</span><Price>{p}</Price><Vol>{v}</Vol></TradeRow>
          ))}
        </Side>
      </Main>

      <Queue>
        <Half>
          <QueueHead $cols="147px 1fr 60px" $pad="0 3px 0 4px"><span>卖<Unit>1</Unit></span><span>--</span><span>--</span></QueueHead>
        </Half>
        <Half $divider>
          <QueueHead $cols="131px 1fr 80px" $pad="0 4px 0 4px">
            <span>买<Unit>1</Unit></span><Price>15.72</Price><span>7.9<Unit>万</Unit></span>
          </QueueHead>
          <QueueGrid>{queue.map((q, i) => <span key={i}>{q}</span>)}</QueueGrid>
        </Half>
      </Queue>

      <BottomNav>
        <IndexItem>
          <Triangle w={12} h={6.5} up />
          18196.33
          <Sector><span>通信设备</span>2.77%</Sector>
        </IndexItem>
        <NavItem><TradeIcon />交易</NavItem>
        <NavItem><PostIcon />发帖</NavItem>
        <NavItem><ApplyIcon />功能</NavItem>
        <NavItem><AddIcon />设自选</NavItem>
      </BottomNav>
    </Page>
  );
}
